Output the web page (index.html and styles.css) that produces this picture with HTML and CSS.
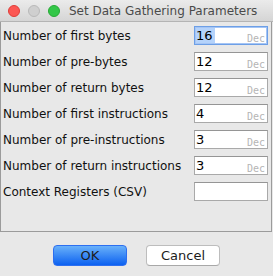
FILE: index.html
```html
<!DOCTYPE html>
<html>
<head>
<meta charset="utf-8">
<link rel="stylesheet" href="styles.css">
</head>
<body>
<div class="window">
  <div class="titlebar">
    <div class="lights">
      <span class="light red"></span>
      <span class="light gray"></span>
      <span class="light green"></span>
    </div>
    <div class="title">Set Data Gathering Parameters</div>
  </div>
  <div class="panel">
    <div class="row">
      <span class="label">Number of first bytes</span>
      <span class="field focused"><span class="value"><span class="sel">16</span></span><span class="unit">Dec</span></span>
    </div>
    <div class="row">
      <span class="label">Number of pre-bytes</span>
      <span class="field"><span class="value">12</span><span class="unit">Dec</span></span>
    </div>
    <div class="row">
      <span class="label">Number of return bytes</span>
      <span class="field"><span class="value">12</span><span class="unit">Dec</span></span>
    </div>
    <div class="row">
      <span class="label">Number of first instructions</span>
      <span class="field"><span class="value">4</span><span class="unit">Dec</span></span>
    </div>
    <div class="row">
      <span class="label">Number of pre-instructions</span>
      <span class="field"><span class="value">3</span><span class="unit">Dec</span></span>
    </div>
    <div class="row">
      <span class="label">Number of return instructions</span>
      <span class="field"><span class="value">3</span><span class="unit">Dec</span></span>
    </div>
    <div class="row">
      <span class="label">Context Registers (CSV)</span>
      <span class="field"></span>
    </div>
  </div>
  <div class="buttons">
    <button class="btn ok">OK</button>
    <button class="btn cancel">Cancel</button>
  </div>
</div>
</body>
</html>
```

FILE: styles.css
```css
html, body {
  margin: 0;
  padding: 0;
  background: #e8e8e8;
}
.window {
  width: 273px;
  height: 276px;
  background: #e8e8e8;
  font-family: "DejaVu Sans", "Liberation Sans", sans-serif;
  overflow: hidden;
}
.titlebar {
  height: 22px;
  box-sizing: border-box;
  display: flex;
  align-items: center;
  background: linear-gradient(#ebebeb, #d5d5d5);
  border-bottom: 1px solid #b4b4b4;
}
.lights {
  display: flex;
  gap: 8px;
  padding-left: 8px;
}
.light {
  width: 12px;
  height: 12px;
  border-radius: 50%;
  box-sizing: border-box;
}
.light.red { background: #fc5753; border: 1px solid #df3d38; }
.light.gray { background: #cfcfcf; border: 1px solid #b9b9b9; }
.light.green { background: #33c748; border: 1px solid #27aa35; }
.title {
  margin-left: 9px;
  font-size: 12px;
  color: #4a4a4a;
  white-space: nowrap;
}
.panel {
  height: 210px;
  box-sizing: border-box;
  border: 1px solid #9b9b9b;
  border-top: none;
  margin-right: 1px;
  padding: 4px 3px 0 2px;
  display: flex;
  flex-direction: column;
  gap: 7px;
}
.row {
  display: flex;
  align-items: center;
  justify-content: space-between;
  height: 19px;
}
.label {
  font-size: 12px;
  color: #111;
  white-space: nowrap;
}
.field {
  position: relative;
  width: 74px;
  height: 19px;
  box-sizing: border-box;
  background: #fff;
  border: 1px solid #a9a9a9;
  border-top-color: #959595;
  display: flex;
  align-items: center;
}
.field.focused {
  border: 1px solid #6d9fe6;
  box-shadow: inset 0 0 0 1px #a5c5f5;
}
.value {
  font-size: 13px;
  color: #000;
  padding-left: 1px;
  line-height: 17px;
}
.sel {
  background: #b5d3fb;
  display: inline-block;
  padding-right: 2px;
  height: 15px;
  line-height: 15px;
}
.unit {
  position: absolute;
  right: 2px;
  bottom: 0;
  font-family: "DejaVu Sans Mono", monospace;
  font-size: 10px;
  line-height: 11px;
  color: #b5b5b5;
}
.buttons {
  display: flex;
  justify-content: center;
  gap: 19px;
  padding-top: 13px;
}
.btn {
  width: 74px;
  height: 21px;
  box-sizing: border-box;
  border-radius: 4px;
  font-family: "DejaVu Sans", sans-serif;
  font-size: 13px;
  color: #1c1c1c;
  padding: 0;
}
.btn.ok {
  background: linear-gradient(#69b1fa, #0c61f0);
  border: 1px solid #2d6ff0;
}
.btn.cancel {
  background: #fff;
  border: 1px solid #bdbdbd;
  border-bottom-color: #a8a8a8;
}
```
